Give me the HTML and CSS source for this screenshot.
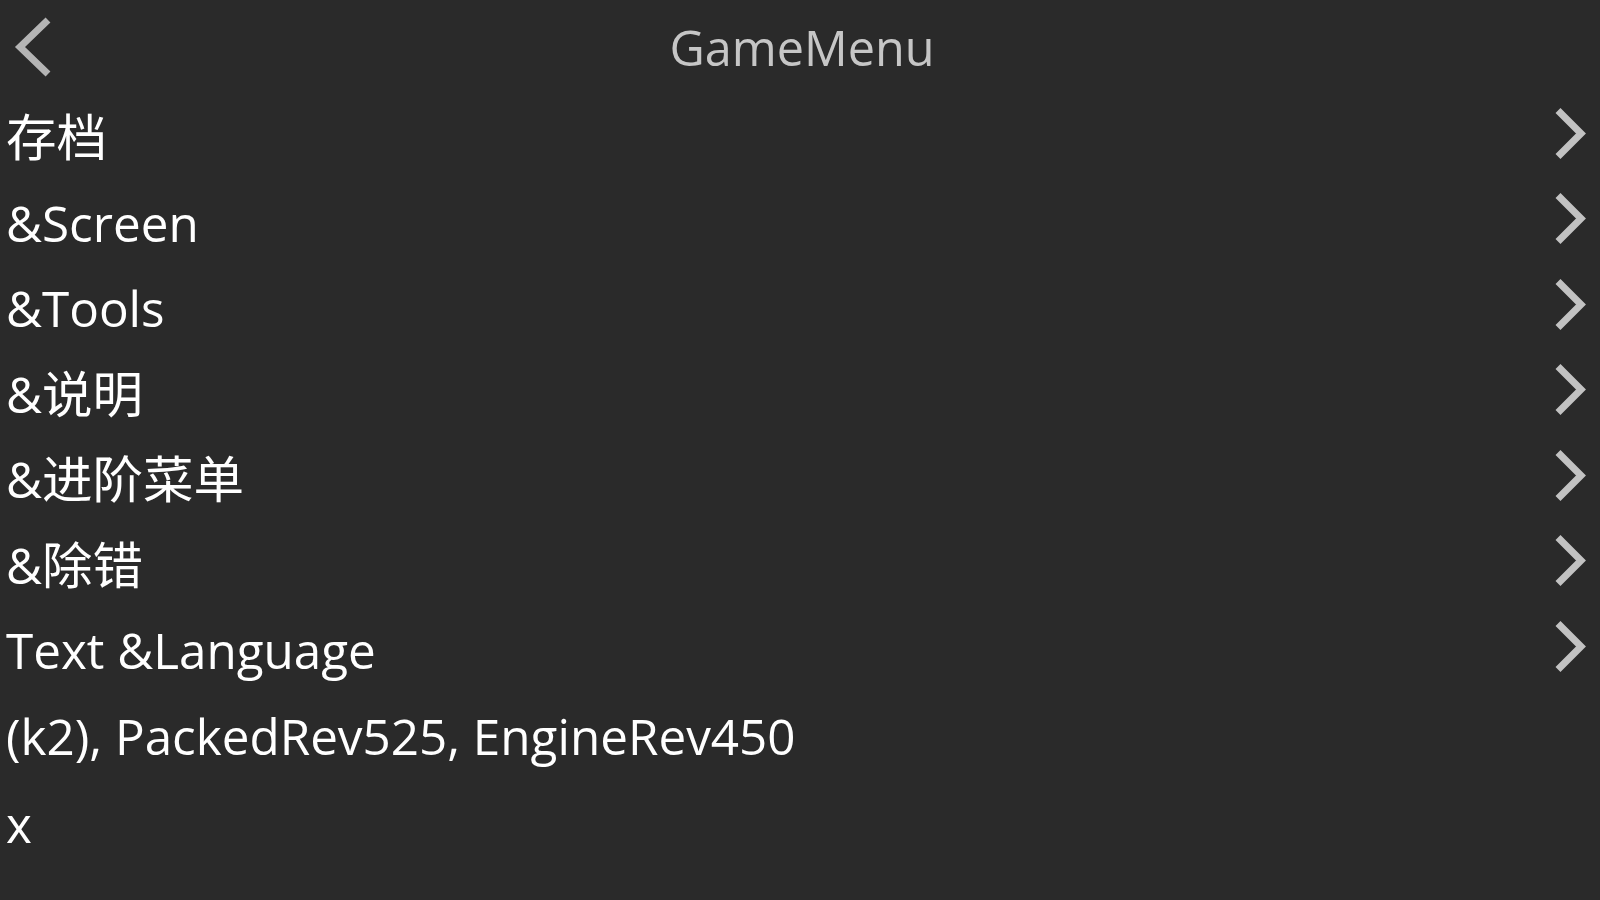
FILE: index.html
```html
<!DOCTYPE html>
<html lang="zh-CN">
<head>
<meta charset="utf-8">
<title>GameMenu</title>
<link rel="stylesheet" href="styles.css">
</head>
<body>
<div class="screen">
  <header class="topbar">
    <div class="back">
      <svg class="back-icon" viewBox="0 0 38 62" width="38" height="62"><polyline points="34,4 6,31 34,58"/></svg>
    </div>
    <div class="title">GameMenu</div>
    <div class="spacer"></div>
  </header>
  <ul class="menu">
    <li class="item"><span class="label"><span class="cjk">存档</span></span><svg class="chev" viewBox="0 0 32 51" width="32" height="51"><polyline points="3,2.5 26,25.5 3,48.5"/></svg></li>
    <li class="item"><span class="label">&amp;Screen</span><svg class="chev" viewBox="0 0 32 51" width="32" height="51"><polyline points="3,2.5 26,25.5 3,48.5"/></svg></li>
    <li class="item"><span class="label">&amp;Tools</span><svg class="chev" viewBox="0 0 32 51" width="32" height="51"><polyline points="3,2.5 26,25.5 3,48.5"/></svg></li>
    <li class="item"><span class="label">&amp;<span class="cjk">说明</span></span><svg class="chev" viewBox="0 0 32 51" width="32" height="51"><polyline points="3,2.5 26,25.5 3,48.5"/></svg></li>
    <li class="item"><span class="label">&amp;<span class="cjk">进阶菜单</span></span><svg class="chev" viewBox="0 0 32 51" width="32" height="51"><polyline points="3,2.5 26,25.5 3,48.5"/></svg></li>
    <li class="item"><span class="label">&amp;<span class="cjk">除错</span></span><svg class="chev" viewBox="0 0 32 51" width="32" height="51"><polyline points="3,2.5 26,25.5 3,48.5"/></svg></li>
    <li class="item"><span class="label">Text &amp;Language</span><svg class="chev" viewBox="0 0 32 51" width="32" height="51"><polyline points="3,2.5 26,25.5 3,48.5"/></svg></li>
    <li class="item"><span class="label">(k2), PackedRev525, EngineRev450</span></li>
    <li class="item item-last"><span class="label">x</span></li>
  </ul>
</div>
</body>
</html>
```
FILE: styles.css
```css
html, body {
  margin: 0;
  padding: 0;
  background: #2a2a2a;
}
body {
  font-family: "Open Sans", "Noto Sans CJK SC", sans-serif;
  color: #ffffff;
  width: 1600px;
  height: 900px;
  overflow: hidden;
}
.screen {
  display: flex;
  flex-direction: column;
}
.topbar {
  height: 96px;
  display: grid;
  grid-template-columns: 1fr auto 1fr;
  align-items: start;
}
.back {
  padding-left: 14px;
  padding-top: 16px;
}
.back-icon {
  display: block;
  overflow: visible;
}
.back-icon polyline {
  fill: none;
  stroke: #b4b4b4;
  stroke-width: 7;
  stroke-linejoin: miter;
  stroke-linecap: butt;
}
.title {
  font-size: 48.6px;
  line-height: 95px;
  color: #c6c6c6;
  padding-left: 4px;
}
.menu {
  list-style: none;
  margin: 0;
  padding: 0;
}
.item {
  height: 85.5px;
  display: flex;
  align-items: center;
  justify-content: space-between;
  padding: 0 13px 0 6px;
}
.item-last {
  margin-top: 2.5px;
}
.label {
  display: block;
  height: 85.5px;
  font-size: 49.4px;
  line-height: 81.5px;
  white-space: nowrap;
}
.cjk {
  font-family: "Noto Sans CJK SC", sans-serif;
  font-size: 50.5px;
  line-height: 1;
}
.chev {
  display: block;
  overflow: visible;
  margin-bottom: 11px;
}
.chev polyline {
  fill: none;
  stroke: #c2c2c2;
  stroke-width: 7;
  stroke-linejoin: miter;
  stroke-linecap: butt;
}
```
